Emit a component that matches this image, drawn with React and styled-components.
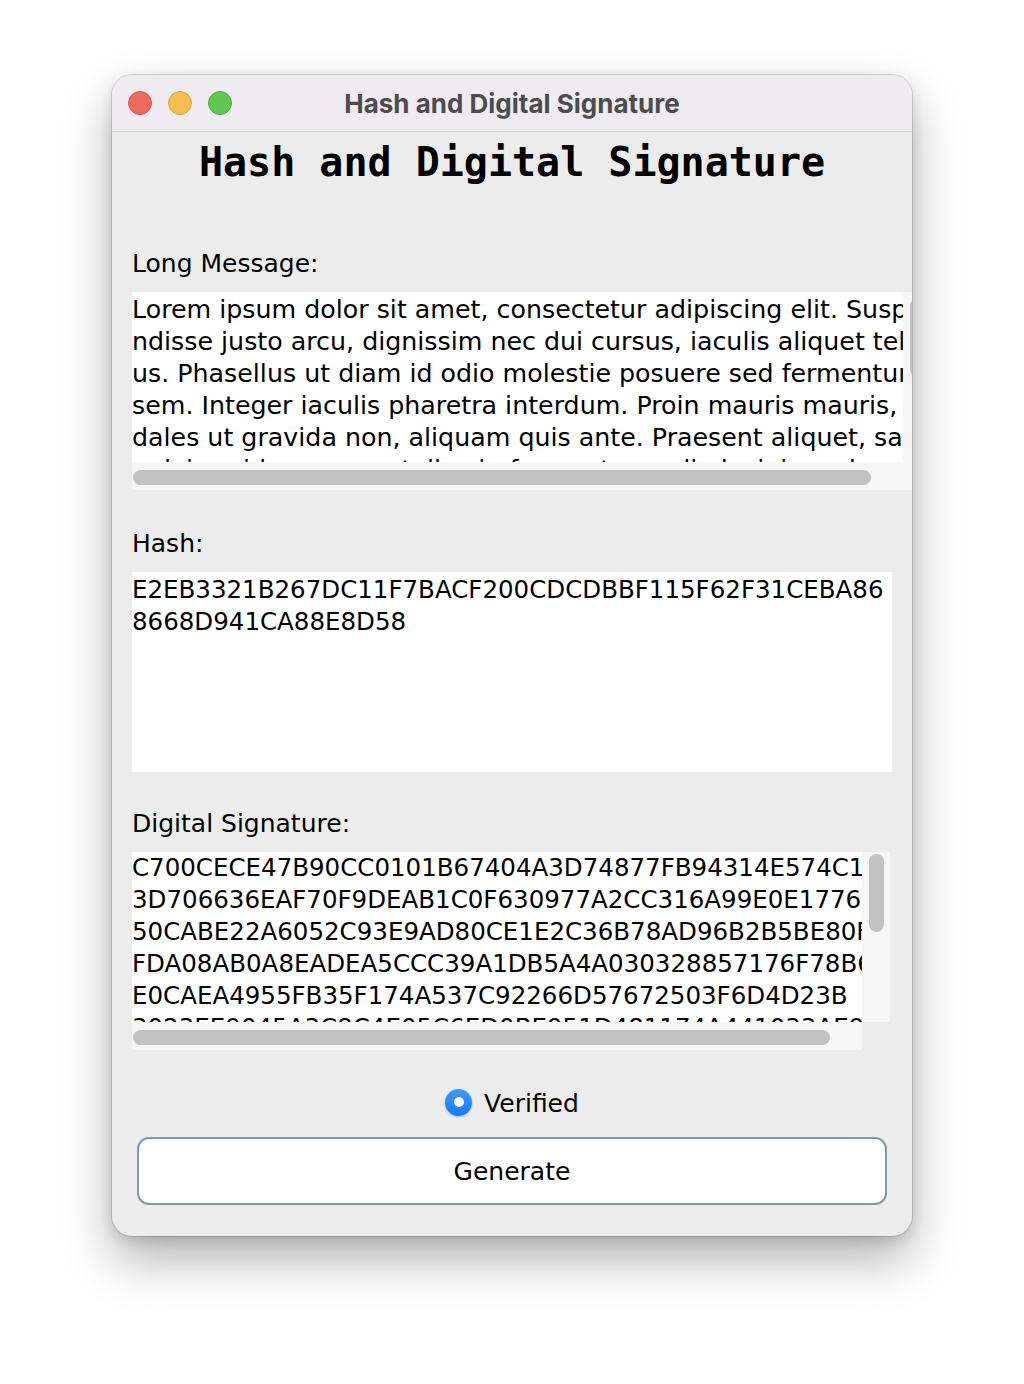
import styled, { createGlobalStyle } from 'styled-components'

const GlobalStyle = createGlobalStyle`
  html, body {
    margin: 0;
    background: #ffffff;
  }
`

const longLines = [
  'Lorem ipsum dolor sit amet, consectetur adipiscing elit. Suspe',
  'ndisse justo arcu, dignissim nec dui cursus, iaculis aliquet tellus. Phasell',
  'us. Phasellus ut diam id odio molestie posuere sed fermentum sem. Integer',
  'sem. Integer iaculis pharetra interdum. Proin mauris mauris, sodales ut',
  'dales ut gravida non, aliquam quis ante. Praesent aliquet, sapien at',
  'pulvinar id magna a, tellus in fermentum odio lacinia sed mauris',
]

const signatureLines = [
  'C700CECE47B90CC0101B67404A3D74877FB94314E574C1A7B3',
  '3D706636EAF70F9DEAB1C0F630977A2CC316A99E0E17760B2C',
  '50CABE22A6052C93E9AD80CE1E2C36B78AD96B2B5BE80F4A1D',
  'FDA08AB0A8EADEA5CCC39A1DB5A4A030328857176F78B6E0C1',
  'E0CAEA4955FB35F174A537C92266D57672503F6D4D23B',
  '3023EE9045A3C8C4E05C6ED0BE951D481174A441033AE9D1F2',
]

const ScrollPane = ({ width, height, lines, pad, size, vThumbTop, vThumbLen, hThumbLen, cornerFill }) => (
  <Pane $w={width} $h={height}>
    <Viewport $pad={pad} $size={size}>
      {lines.join('\n')}
    </Viewport>
    <VTrack $top={vThumbTop}>
      <VThumb $len={vThumbLen} />
    </VTrack>
    <HTrack>
      <HThumb $len={hThumbLen} />
    </HTrack>
    <Corner $fill={cornerFill} />
  </Pane>
)

const App = () => {
  return (
    <Page>
      <GlobalStyle />
      <Window>
        <TitleBar>
          <Lights>
            <Light $bg="#ee6a5f" $edge="#d65a4f" />
            <Light $bg="#f5be4f" $edge="#d9a441" />
            <Light $bg="#62c554" $edge="#52a945" />
          </Lights>
          <WindowTitle>Hash and Digital Signature</WindowTitle>
          <span />
        </TitleBar>
        <Body>
          <Heading>Hash and Digital Signature</Heading>

          <Field $mt={62}>
            <Label>Long Message:</Label>
            <ScrollPane
              width={771}
              height={170}
              lines={longLines}
              pad={2}
              size={25.3}
              vThumbTop={6}
              vThumbLen={79}
              hThumbLen={738}
              cornerFill
            />
          </Field>

          <Field $mt={38}>
            <Label>Hash:</Label>
            <HashBox>
              {'E2EB3321B267DC11F7BACF200CDCDBBF115F62F31CEBA86\n8668D941CA88E8D58'}
            </HashBox>
          </Field>

          <Field $mt={36}>
            <Label>Digital Signature:</Label>
            <ScrollPane
              width={730}
              height={170}
              lines={signatureLines}
              pad={0}
              size={24.5}
              vThumbTop={2}
              vThumbLen={78}
              hThumbLen={697}
            />
          </Field>

          <RadioRow>
            <Radio />
            <RadioText>Verified</RadioText>
          </RadioRow>

          <Button>Generate</Button>
        </Body>
      </Window>
    </Page>
  )
}
export default App

const Page = styled.div`
  padding: 75px 0 120px 112px;
`

const Window = styled.div`
  width: 800px;
  border-radius: 20px;
  overflow: hidden;
  background: #ececec;
  box-shadow: 0 0 0 1px rgba(0, 0, 0, 0.14), 0 24px 50px rgba(0, 0, 0, 0.3),
    0 4px 14px rgba(0, 0, 0, 0.12);
`

const TitleBar = styled.div`
  height: 56px;
  display: grid;
  grid-template-columns: 1fr auto 1fr;
  align-items: center;
  background: #eeecf1;
  border-bottom: 1px solid #d3d2d6;
`

const Lights = styled.div`
  display: flex;
  gap: 16px;
  padding-left: 16px;
`

const Light = styled.span`
  width: 24px;
  height: 24px;
  border-radius: 50%;
  box-sizing: border-box;
  background: ${(p) => p.$bg};
  border: 1px solid ${(p) => p.$edge};
`

const WindowTitle = styled.div`
  font-family: Inter, 'Liberation Sans', sans-serif;
  font-weight: 700;
  font-size: 26px;
  color: #4c4c4e;
`

const Body = styled.div`
  display: flex;
  flex-direction: column;
  align-items: flex-start;
  padding: 6px 20px 31px 20px;
  font-family: 'DejaVu Sans', sans-serif;
  font-size: 25px;
  line-height: 32px;
  color: #000;
`

const Heading = styled.h1`
  align-self: stretch;
  margin: 0;
  text-align: center;
  font-family: 'DejaVu Sans Mono', monospace;
  font-weight: bold;
  font-size: 40px;
  line-height: 48px;
  color: #000;
`

const Field = styled.div`
  display: flex;
  flex-direction: column;
  gap: 12px;
  margin-top: ${(p) => p.$mt}px;
`

const Label = styled.div`
  height: 32px;
`

const Pane = styled.div`
  display: grid;
  grid-template-columns: ${(p) => p.$w}px 28px;
  grid-template-rows: ${(p) => p.$h}px 28px;
`

const Viewport = styled.div`
  background: #ffffff;
  overflow: hidden;
  white-space: pre;
  font-size: ${(p) => p.$size}px;
  padding-top: ${(p) => p.$pad}px;
`

const VTrack = styled.div`
  background: #f6f6f6;
  padding: ${(p) => p.$top}px 0 0 7px;
`

const VThumb = styled.div`
  width: 15px;
  height: ${(p) => p.$len}px;
  border-radius: 8px;
  background: #c2c2c2;
`

const HTrack = styled.div`
  background: #f6f6f6;
  padding: 8px 0 0 1px;
`

const HThumb = styled.div`
  width: ${(p) => p.$len}px;
  height: 15px;
  border-radius: 8px;
  background: #c2c2c2;
`

const Corner = styled.div`
  background: ${(p) => (p.$fill ? '#f6f6f6' : 'transparent')};
`

const HashBox = styled.div`
  width: 760px;
  height: 200px;
  box-sizing: border-box;
  padding-top: 2px;
  background: #ffffff;
  white-space: pre;
  overflow: hidden;
  font-size: 24.5px;
`

const RadioRow = styled.div`
  align-self: stretch;
  margin-top: 36px;
  display: flex;
  justify-content: center;
  align-items: center;
  gap: 12px;
  height: 32px;
`

const Radio = styled.span`
  width: 27px;
  height: 27px;
  border-radius: 50%;
  box-sizing: border-box;
  background: linear-gradient(#3f9bfd, #1878f3);
  box-shadow: 0 1px 2px rgba(0, 80, 200, 0.35);
  display: grid;
  place-items: center;

  &::after {
    content: '';
    width: 10px;
    height: 10px;
    border-radius: 50%;
    background: #ffffff;
  }
`

const RadioText = styled.span`
  position: relative;
  top: 2px;
`

const Button = styled.button`
  align-self: stretch;
  margin: 19px 5px 0 5px;
  height: 68px;
  box-sizing: border-box;
  background: #ffffff;
  border: 2px solid #8696ab;
  border-radius: 12px;
  font-family: 'DejaVu Sans', sans-serif;
  font-size: 25px;
  color: #000;
`
